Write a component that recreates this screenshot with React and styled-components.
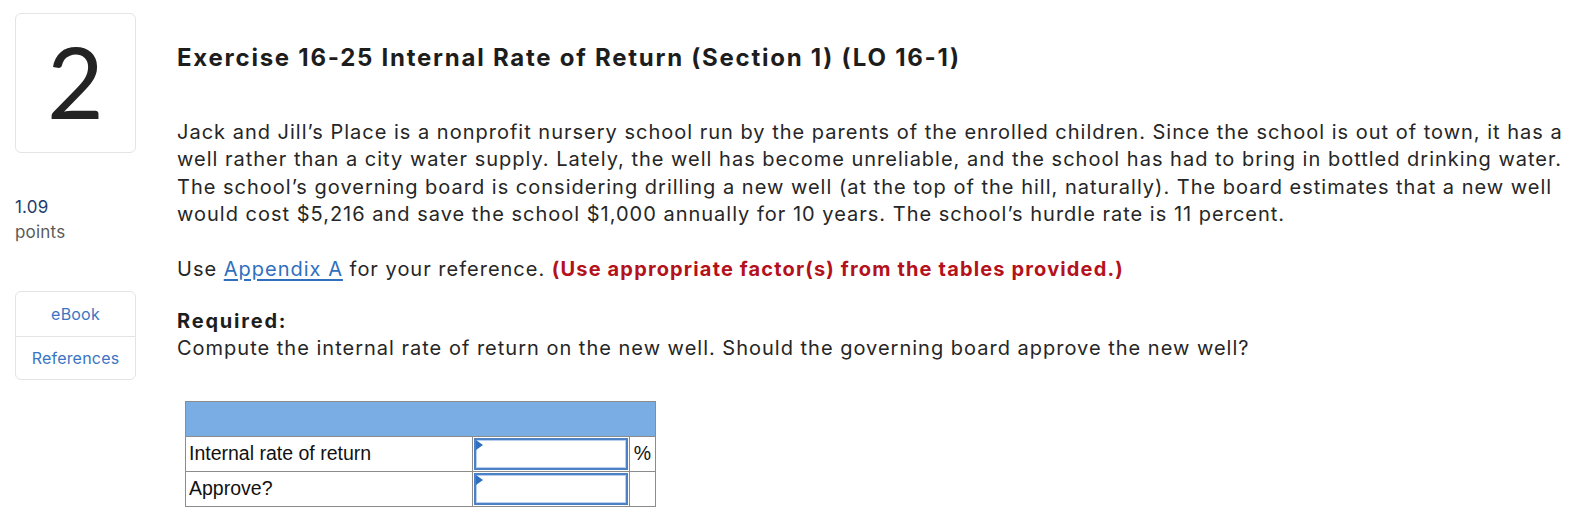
import React from "react";
import styled, { createGlobalStyle } from "styled-components";

const GlobalStyle = createGlobalStyle`
  html, body { margin: 0; padding: 0; background: #ffffff; }
  body { font-family: "Inter", "Lato", sans-serif; color: #222; }
`;

const Page = styled.div`
  display: flex;
  align-items: flex-start;
  gap: 41px;
  padding: 13px 10px 0 15px;
  width: 1588px;
  box-sizing: border-box;
`;

const Sidebar = styled.aside`
  width: 121px;
  flex: none;
  display: flex;
  flex-direction: column;
`;

const NumberCard = styled.div`
  height: 140px;
  border: 1px solid #e4e4e4;
  border-radius: 6px;
  box-sizing: border-box;
  display: flex;
  align-items: center;
  justify-content: center;
  font-family: "Lato", sans-serif;
  font-weight: 400;
  font-size: 98px;
  line-height: 1;
  color: #232323;
  padding-bottom: 4px;
`;

const Points = styled.div`
  margin-top: 42px;
  font-family: "Inter", sans-serif;
  font-size: 17px;
  line-height: 25px;
  letter-spacing: 0.2px;
`;

const PointsValue = styled.div`
  color: #1c3d6c;
`;

const PointsLabel = styled.div`
  color: #5a5a5a;
`;

const LinkBox = styled.div`
  margin-top: 46px;
  border: 1px solid #e4e4e4;
  border-radius: 6px;
  display: flex;
  flex-direction: column;
`;

const SideLink = styled.div`
  height: ${p => p.$h}px;
  display: flex;
  align-items: center;
  justify-content: center;
  font-family: "Inter", sans-serif;
  font-size: 16px;
  letter-spacing: 0.2px;
  color: #3b74c2;
  & + & { border-top: 1px solid #e4e4e4; }
`;

const Main = styled.main`
  flex: 1;
  min-width: 0;
  padding-top: 30px;
`;

const Title = styled.h2`
  margin: 0;
  font-family: "Inter", sans-serif;
  font-weight: 700;
  font-size: 24px;
  line-height: 30px;
  letter-spacing: 1.75px;
  color: #1d1d1d;
`;

const Para = styled.p`
  margin: ${p => p.$mt}px 0 0;
  font-family: "Inter", sans-serif;
  font-size: 20px;
  line-height: 27.4px;
  letter-spacing: 1px;
  color: #262626;
`;

const Link = styled.a`
  color: #2f6fbe;
  text-decoration: underline;
  text-underline-offset: 3px;
`;

const Red = styled.strong`
  color: #b3121c;
  font-weight: 700;
  letter-spacing: 1.15px;
`;

const Bold = styled.strong`
  display: block;
  color: #1d1d1d;
  font-weight: 700;
  letter-spacing: 1.8px;
`;

const Table = styled.table`
  margin: 38px 0 0 8px;
  border-collapse: collapse;
  border: 1px solid #8c8c8c;
  font-family: "Liberation Sans", Arial, sans-serif;
  font-size: 19.5px;
  color: #111;
`;

const HeadCell = styled.td`
  height: 34px;
  padding: 0;
  background: #79ade3;
`;

const LabelCell = styled.td`
  width: 283px;
  height: 34px;
  padding: 0 0 0 3px;
  border-top: 1px solid #8c8c8c;
`;

const InputCell = styled.td`
  width: 154px;
  padding: 1px;
  border-top: 1px solid #8c8c8c;
  border-left: 1px solid #8c8c8c;
`;

const UnitCell = styled.td`
  width: 25px;
  padding: 0;
  text-align: center;
  border-top: 1px solid #8c8c8c;
  border-left: 1px solid #8c8c8c;
`;

const InputBox = styled.div`
  position: relative;
  height: 32px;
  box-sizing: border-box;
  border: 2px solid #4c82c5;
  box-shadow: inset 0 0 0 1px #b8d0ee;
  background: #fff;
`;

const Flag = styled.span`
  position: absolute;
  left: 0;
  top: 0;
  width: 0;
  height: 0;
  border-top: 5px solid transparent;
  border-bottom: 5px solid transparent;
  border-left: 7px solid #2f6fc0;
`;

function AnswerRow({ label, unit }) {
  return (
    <tr>
      <LabelCell>{label}</LabelCell>
      <InputCell>
        <InputBox>
          <Flag />
        </InputBox>
      </InputCell>
      <UnitCell>{unit}</UnitCell>
    </tr>
  );
}

export default function App() {
  return (
    <>
      <GlobalStyle />
      <Page>
        <Sidebar>
          <NumberCard>2</NumberCard>
          <Points>
            <PointsValue>1.09</PointsValue>
            <PointsLabel>points</PointsLabel>
          </Points>
          <LinkBox>
            <SideLink $h={44}>eBook</SideLink>
            <SideLink $h={42}>References</SideLink>
          </LinkBox>
        </Sidebar>
        <Main>
          <Title>Exercise 16-25 Internal Rate of Return (Section 1) (LO 16-1)</Title>
          <Para $mt={46}>
            Jack and Jill’s Place is a nonprofit nursery school run by the parents of the enrolled
            children. Since the school is out of town, it has a well rather than a city water supply.
            Lately, the well has become unreliable, and the school has had to bring in bottled
            drinking water. The school’s governing board is considering drilling a new well (at the
            top of the hill, naturally). The board estimates that a new well would cost $5,216 and
            save the school $1,000 annually for 10 years. The school’s hurdle rate is 11 percent.
          </Para>
          <Para $mt={27}>
            Use <Link>Appendix A</Link> for your reference.{" "}
            <Red>(Use appropriate factor(s) from the tables provided.)</Red>
          </Para>
          <Para $mt={25}>
            <Bold>Required:</Bold>
            Compute the internal rate of return on the new well. Should the governing board approve
            the new well?
          </Para>
          <Table>
            <tbody>
              <tr>
                <HeadCell colSpan={3} />
              </tr>
              <AnswerRow label="Internal rate of return" unit="%" />
              <AnswerRow label="Approve?" unit="" />
            </tbody>
          </Table>
        </Main>
      </Page>
    </>
  );
}
